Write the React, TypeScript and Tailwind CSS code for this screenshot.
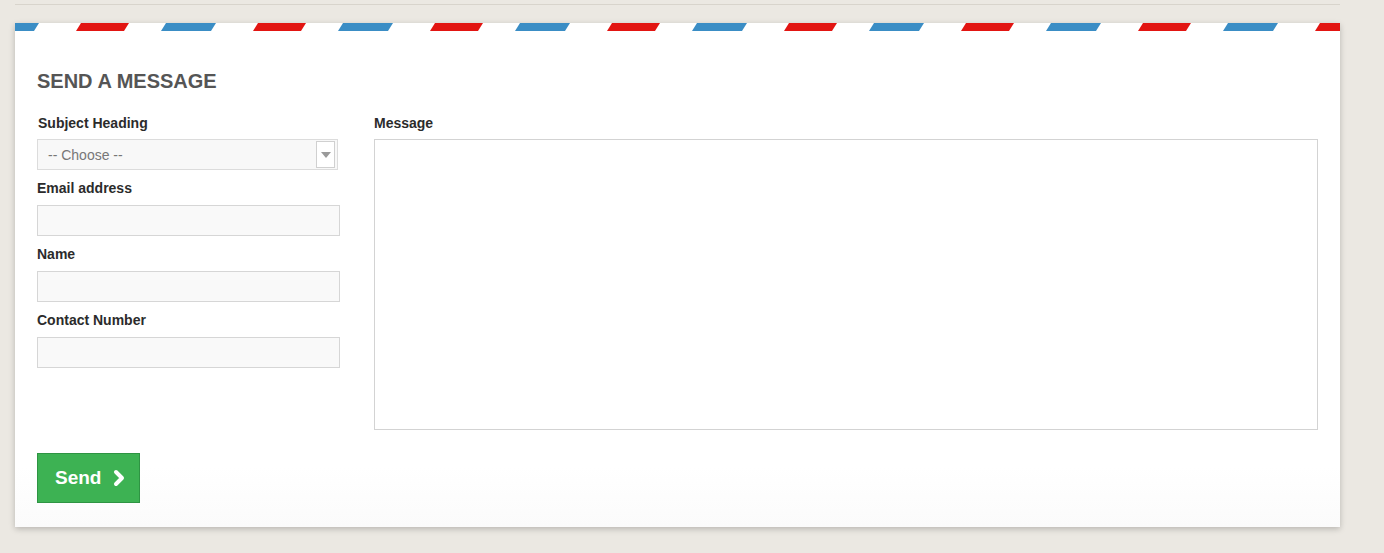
import { ChevronRight } from "lucide-react";

const fields = ["Email address", "Name", "Contact Number"];

function AirmailStripe() {
    return (
        <svg className="block w-full h-2" preserveAspectRatio="none">
            <defs>
                <pattern id="airmail" width="177" height="8" patternUnits="userSpaceOnUse">
                    <polygon points="-27,0 24,0 19,8 -32,8" fill="#3a8dc5" />
                    <polygon points="66,0 114,0 109,8 61,8" fill="#e21512" />
                    <polygon points="151,0 202,0 197,8 146,8" fill="#3a8dc5" />
                </pattern>
            </defs>
            <rect width="100%" height="8" fill="url(#airmail)" />
        </svg>
    );
}

export default function App() {
    return (
        <div
            className="min-h-[553px] bg-[#ebe8e2] pt-1 pb-6"
            style={{ fontFamily: '"Liberation Sans", Arial, sans-serif' }}
        >
            <div className="ml-[15px] w-[1325px] h-px bg-[#d8d4cc]" />

            <div className="ml-[15px] mt-[18px] w-[1325px] bg-[linear-gradient(180deg,#ffffff_0%,#ffffff_88%,#fbfbfb_100%)] shadow-[0_2px_6px_rgba(0,0,0,0.22)]">
                <AirmailStripe />

                <div className="px-[22px] pt-[38px] pb-6">
                    <h2 className="text-[20px] leading-6 font-bold text-[#555555] uppercase">Send a message</h2>

                    <div className="mt-5 flex gap-[34px]">
                        <div className="w-[303px] shrink-0 flex flex-col">
                            <label className="block text-sm leading-5 font-bold text-[#2b2b2b] pl-px">Subject Heading</label>
                            <div className="mt-[6px] h-[31px] w-[301px] flex items-center border border-[#dcdcdc] bg-[#f8f8f8] pl-[10px] pr-[2px]">
                                <span className="flex-1 text-sm text-[#777777]">-- Choose --</span>
                                <div className="h-[27px] w-[19px] flex items-center justify-center border border-[#d0d0d0] bg-white">
                                    <svg width="10" height="6" viewBox="0 0 10 6">
                                        <polygon points="0,0 10,0 5,6" fill="#9a9a9a" />
                                    </svg>
                                </div>
                            </div>

                            {fields.map((f) => (
                                <div key={f} className="mt-2">
                                    <label className="block text-sm leading-5 font-bold text-[#2b2b2b]">{f}</label>
                                    <input
                                        type="text"
                                        className="mt-[7px] block h-[31px] w-[303px] border border-[#d6d6d6] bg-[#f9f9f9] outline-none"
                                    />
                                </div>
                            ))}
                        </div>

                        <div className="flex-1 flex flex-col">
                            <label className="block text-sm leading-5 font-bold text-[#2b2b2b]">Message</label>
                            <textarea className="mt-[6px] block h-[291px] w-full border border-[#d3d3d3] bg-white outline-none resize-none" />
                        </div>
                    </div>

                    <button className="mt-[23px] h-[50px] w-[103px] flex items-center gap-[6px] pl-[17px] border border-[#2e9443] bg-[#3db253] text-white text-[19px] font-bold">
                        Send
                        <ChevronRight size={24} strokeWidth={4} />
                    </button>
                </div>
            </div>
        </div>
    );
}
